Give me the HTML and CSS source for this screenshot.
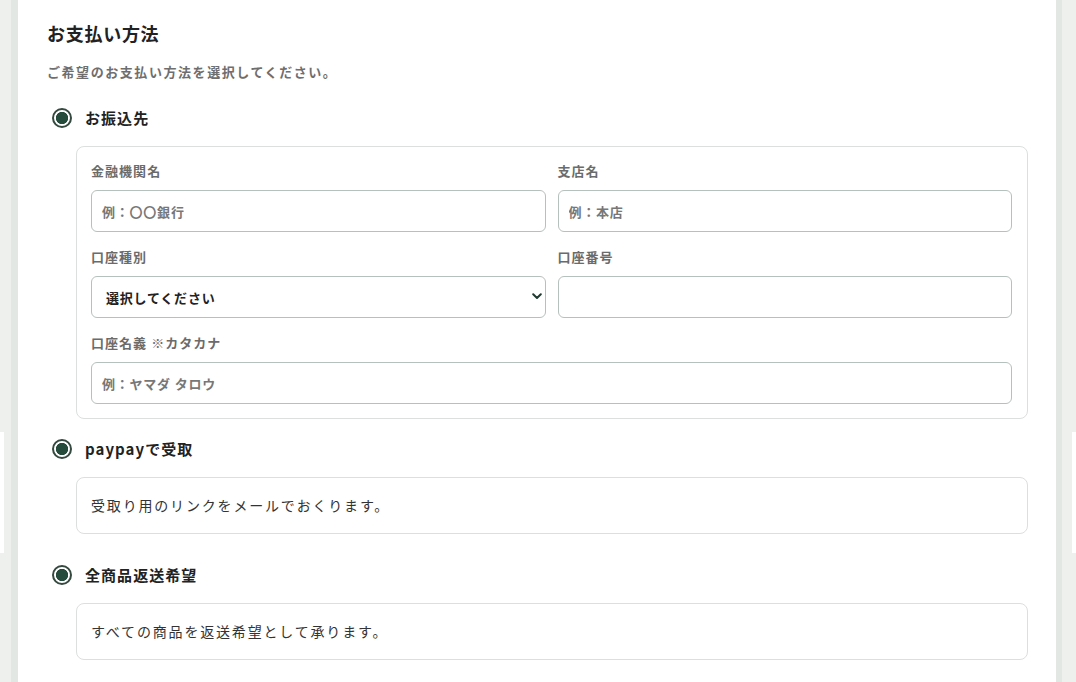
FILE: index.html
```html
<!DOCTYPE html>
<html lang="ja">
<head>
<meta charset="utf-8">
<title>お支払い方法</title>
<link rel="stylesheet" href="styles.css">
</head>
<body>
<div class="band"></div>
<div class="frame">
  <main class="card">
    <h2 class="title">お支払い方法</h2>
    <p class="lead">ご希望のお支払い方法を選択してください。</p>

    <label class="option option-first">
      <input type="radio" name="pay" class="radio" checked>
      <span class="option-text">お振込先</span>
    </label>
    <div class="box box-form">
      <div class="field">
        <div class="field-label">金融機関名</div>
        <input class="input" type="text" placeholder="例：〇〇銀行">
      </div>
      <div class="field">
        <div class="field-label">支店名</div>
        <input class="input" type="text" placeholder="例：本店">
      </div>
      <div class="field">
        <div class="field-label">口座種別</div>
        <div class="select-wrap">
          <select class="input select">
            <option>選択してください</option>
            <option>普通</option>
            <option>当座</option>
          </select>
          <svg class="chevron" width="10" height="7" viewBox="0 0 10 7"><path d="M1.2 1.3 L5 5 L8.8 1.3" fill="none" stroke="#1f3a31" stroke-width="2" stroke-linecap="round" stroke-linejoin="round"/></svg>
        </div>
      </div>
      <div class="field">
        <div class="field-label">口座番号</div>
        <input class="input" type="text">
      </div>
      <div class="field field-wide">
        <div class="field-label">口座名義 ※カタカナ</div>
        <input class="input" type="text" placeholder="例：ヤマダ タロウ">
      </div>
    </div>

    <label class="option option-second">
      <input type="radio" name="pay2" class="radio" checked>
      <span class="option-text">paypayで受取</span>
    </label>
    <div class="box box-note">受取り用のリンクをメールでおくります。</div>

    <label class="option option-third">
      <input type="radio" name="pay3" class="radio" checked>
      <span class="option-text">全商品返送希望</span>
    </label>
    <div class="box box-note">すべての商品を返送希望として承ります。</div>
  </main>
</div>
</body>
</html>
```

FILE: styles.css
```css
* { box-sizing: border-box; }

html, body {
  margin: 0;
  padding: 0;
  height: 100%;
}

body {
  background: #eef0ed;
  font-family: "Noto Sans CJK JP", "Noto Sans", sans-serif;
  color: #222;
  overflow: hidden;
  position: relative;
}

.band {
  position: absolute;
  left: 0;
  right: 0;
  top: 432px;
  height: 121px;
  background: #ffffff;
  z-index: 0;
}

.frame {
  position: relative;
  z-index: 1;
  margin: 0 4px;
  height: 100%;
  background: #eef0ed;
  padding: 0 10px 0 7px;
}

.card {
  height: 100%;
  background: #ffffff;
  border-left: 7px solid #e3e7e3;
  border-right: 6px solid #e3e7e3;
  padding: 20px 28px 0 29px;
}

.title {
  margin: 0;
  font-size: 18px;
  line-height: 26px;
  font-weight: 700;
  color: #222;
  letter-spacing: 0.04em;
}

.lead {
  margin: 16px 0 0;
  font-size: 13px;
  line-height: 20px;
  font-weight: 700;
  color: #6e6e6e;
  letter-spacing: 0.12em;
}

.option {
  display: flex;
  align-items: center;
  height: 24px;
  padding-left: 5px;
  gap: 13px;
}

.option-first { margin-top: 24px; }
.option-second { margin-top: 18px; }
.option-third { margin-top: 29px; }

.radio {
  appearance: none;
  -webkit-appearance: none;
  margin: 0;
  width: 20px;
  height: 20px;
  border-radius: 50%;
  border: 2px solid #34493f;
  background: radial-gradient(circle, #254b3d 0, #254b3d 5.8px, #ffffff 6.5px);
  flex: none;
}

.option-text {
  font-size: 15px;
  font-weight: 700;
  color: #222;
  letter-spacing: 0.07em;
  line-height: 24px;
}

.box {
  margin: 16px 0 0 29px;
  border: 1px solid #dcdfdd;
  border-radius: 8px;
  background: #fff;
}

.box-form {
  display: grid;
  grid-template-columns: 1fr 1fr;
  column-gap: 12px;
  row-gap: 15px;
  padding: 14px 15px 14px 14px;
}

.field-wide { grid-column: 1 / span 2; }

.field-label {
  font-size: 13px;
  line-height: 20px;
  font-weight: 700;
  color: #6b6b6b;
  letter-spacing: 0.08em;
  margin-bottom: 9px;
}

.input {
  display: block;
  width: 100%;
  height: 42px;
  border: 1px solid #b6c0bc;
  border-radius: 6px;
  padding: 0 10px;
  font-family: inherit;
  font-size: 13px;
  font-weight: 700;
  color: #222;
  background: #fff;
  letter-spacing: 0.06em;
  outline: none;
}

.input::placeholder {
  color: #777;
  opacity: 1;
}

.select-wrap { position: relative; }

.select {
  appearance: none;
  -webkit-appearance: none;
  padding-left: 14px;
  color: #222;
}

.chevron {
  position: absolute;
  right: 4px;
  top: 17px;
  pointer-events: none;
}

.box-note {
  padding: 16px 14px;
  font-size: 14px;
  line-height: 23px;
  color: #333;
  letter-spacing: 0.13em;
}
```
